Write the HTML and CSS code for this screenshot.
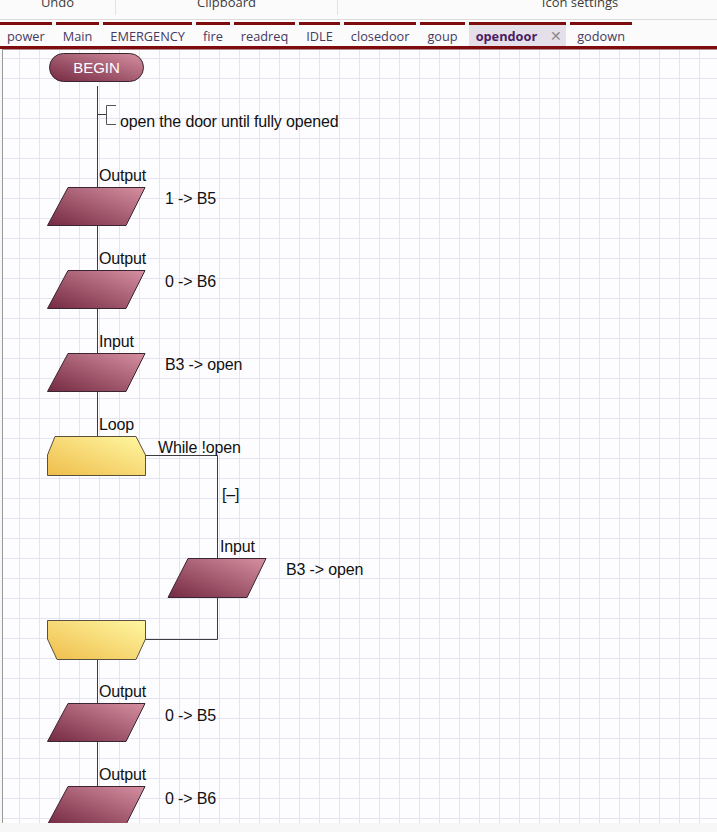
FILE: index.html
```html
<!DOCTYPE html>
<html>
<head>
<meta charset="utf-8">
<link rel="stylesheet" href="styles.css">
</head>
<body>
<div class="ribbon">
  <div class="group g1"><span>Undo</span></div>
  <div class="group g2"><span>Clipboard</span></div>
  <div class="group g3"><span>Icon settings</span></div>
</div>
<div class="tabs">
  <div class="tab">power</div>
  <div class="tab">Main</div>
  <div class="tab">EMERGENCY</div>
  <div class="tab">fire</div>
  <div class="tab">readreq</div>
  <div class="tab">IDLE</div>
  <div class="tab">closedoor</div>
  <div class="tab">goup</div>
  <div class="tab active">opendoor<span class="close">✕</span></div>
  <div class="tab">godown</div>
</div>
<div class="canvas">
  <svg class="chart" width="714" height="773" viewBox="3 50 714 773" xmlns="http://www.w3.org/2000/svg">
    <defs>
      <linearGradient id="maroon" x1="0" y1="1" x2="1" y2="0">
        <stop offset="0" stop-color="#742a42"/>
        <stop offset="1" stop-color="#d68fa1"/>
      </linearGradient>
      <linearGradient id="gold" x1="0" y1="1" x2="1" y2="0">
        <stop offset="0" stop-color="#efbd4c"/>
        <stop offset="1" stop-color="#fff7a2"/>
      </linearGradient>
    </defs>
    <g class="wires">
      <line x1="97.5" y1="86" x2="97.5" y2="436"/>
      <line x1="97.5" y1="659" x2="97.5" y2="823"/>
      <polyline points="97.5,114.5 106.5,114.5"/>
      <polyline class="bracket" points="116,105.5 106.5,105.5 106.5,124.5 116,124.5"/>
      <polyline points="145,455.5 217.5,455.5 217.5,639.5 145,639.5"/>
    </g>
    <g class="texts">
      <text x="120" y="127">open the door until fully opened</text>
      <text x="99" y="181">Output</text>
      <text x="165" y="204">1 -&gt; B5</text>
      <text x="99" y="264">Output</text>
      <text x="165" y="287">0 -&gt; B6</text>
      <text x="99" y="347">Input</text>
      <text x="165" y="370">B3 -&gt; open</text>
      <text x="99" y="430">Loop</text>
      <text x="158" y="453">While !open</text>
      <text x="222" y="500">[–]</text>
      <text x="220" y="552">Input</text>
      <text x="286" y="575">B3 -&gt; open</text>
      <text x="99" y="697">Output</text>
      <text x="165" y="721">0 -&gt; B5</text>
      <text x="99" y="780">Output</text>
      <text x="165" y="804">0 -&gt; B6</text>
    </g>
    <g class="shapes">
      <rect class="maroon" x="49.5" y="53.5" width="94" height="28" rx="14" ry="14"/>
      <polygon class="maroon" points="68,187.5 145,187.5 126,225.5 47.5,225.5"/>
      <polygon class="maroon" points="68,270.5 145,270.5 126,308.5 47.5,308.5"/>
      <polygon class="maroon" points="68,353.5 145,353.5 126,391.5 47.5,391.5"/>
      <polygon class="gold" points="55,436.5 136,436.5 145.5,455 145.5,475.5 47.5,475.5 47.5,455"/>
      <polygon class="maroon" points="188,558.5 266,558.5 247,597.5 168,597.5"/>
      <polygon class="gold" points="47.5,620.5 145.5,620.5 145.5,639 136,659.5 57,659.5 47.5,639"/>
      <polygon class="maroon" points="68,703.5 145,703.5 126,741.5 47.5,741.5"/>
      <polygon class="maroon" points="68,786.5 145,786.5 126,824.5 47.5,824.5"/>
    </g>
    <text class="begin" x="96.5" y="73">BEGIN</text>
  </svg>
</div>
</body>
</html>
```
FILE: styles.css
```css
html, body {
  margin: 0;
  padding: 0;
  width: 717px;
  height: 832px;
  overflow: hidden;
  background: #f7f7f7;
  font-family: "Open Sans", "Noto Sans", sans-serif;
}

.ribbon {
  display: flex;
  height: 19px;
  border-bottom: 1px solid #dcdcdc;
  background: #fbfbfb;
  overflow: hidden;
}

.group {
  flex: none;
  display: flex;
  justify-content: center;
  border-right: 1px solid #e2e2e2;
  height: 15px;
}

.group span {
  font-size: 13px;
  line-height: 16px;
  margin-top: -6px;
  color: #3d3d3d;
}

.g1 { width: 115px; }
.g2 { width: 221px; }
.g3 { width: 484px; border-right: none; }

.tabs {
  display: flex;
  gap: 4px;
  height: 24px;
  padding-top: 2px;
  border-bottom: 3px solid #7e0c0c;
  background: #fbfbfb;
}

.tab {
  flex: none;
  display: flex;
  align-items: center;
  gap: 13px;
  height: 21px;
  padding: 0 7px;
  border-top: 3px solid #7e0c0c;
  font-size: 12.75px;
  color: #443a62;
  white-space: nowrap;
}

.tab.active {
  background: #e4dfe9;
  font-weight: bold;
  padding-right: 4px;
  color: #4b1b63;
}

.close {
  font-size: 14px;
  font-weight: normal;
  color: #8a8a8a;
}

.canvas {
  height: 773px;
  margin-left: 2px;
  border-left: 1px solid #9a9a9a;
  border-top: 1px solid #b48a94;
  background-color: #fdfdff;
  background-image:
    linear-gradient(to right, transparent 19px, #e5e4f2 19px, #e5e4f2 20px, transparent 20px),
    linear-gradient(to bottom, transparent 19px, #e5e4f2 19px, #e5e4f2 20px, transparent 20px);
  background-size: 20px 20px;
  background-position: -3px -11px;
  overflow: hidden;
}

.chart {
  display: block;
}

.wires line,
.wires polyline {
  stroke: #3c3c3c;
  stroke-width: 1;
  fill: none;
}

.wires .bracket {
  stroke: #555;
}

.texts text {
  font-family: "Liberation Sans", Arial, sans-serif;
  font-size: 16px;
  letter-spacing: -0.15px;
  fill: #111;
}

.maroon {
  fill: url(#maroon);
  stroke: #3a2530;
  stroke-width: 1;
}

.gold {
  fill: url(#gold);
  stroke: #5a5040;
  stroke-width: 1;
}

.begin {
  font-family: "Liberation Sans", Arial, sans-serif;
  font-size: 15px;
  fill: #ffffff;
  text-anchor: middle;
}
```
